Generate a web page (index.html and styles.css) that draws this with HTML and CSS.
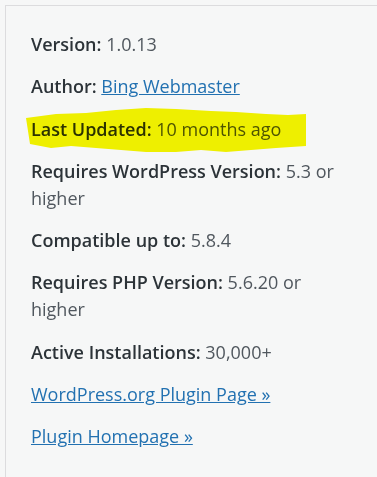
FILE: index.html
```html
<!DOCTYPE html>
<html>
<head>
  <title>Plugin details</title>
  <meta http-equiv="Content-Type" content="text/html; charset=utf-8">
  <link rel="stylesheet" href="styles.css">
</head>
<body>
<div class="fyi">
  <ul>
    <li><strong>Version:</strong> 1.0.13</li>
    <li><strong>Author:</strong> <a href="#">Bing Webmaster</a></li>
    <li class="marked">
      <svg class="marker" width="282" height="50" viewBox="0 0 282 50">
        <path d="M0 12 L30 8 L60 7 L90 4 L120 2 L150 3 L185 5 L210 6 L240 8 L262 9 L280 8 L280 40 L250 42 L225 44 L200 46 L175 44 L150 46 L120 46 L95 44 L70 42 L45 40 L25 42 L4 38 Z" fill="#f7f700"/>
      </svg>
      <strong>Last Updated:</strong> 10 months ago
    </li>
    <li><strong>Requires WordPress Version:</strong> 5.3 or higher</li>
    <li><strong>Compatible up to:</strong> 5.8.4</li>
    <li><strong>Requires PHP Version:</strong> 5.6.20 or higher</li>
    <li><strong>Active Installations:</strong> 30,000+</li>
    <li><a href="#">WordPress.org Plugin Page &raquo;</a></li>
    <li><a href="#">Plugin Homepage &raquo;</a></li>
  </ul>
</div>
</body>
</html>
```

FILE: styles.css
```css
body {
  margin: 0;
  background: #f6f7f7;
  font-family: "Open Sans", "Noto Sans", sans-serif;
  font-size: 18px;
  color: #50575e;
}

div.fyi {
  box-sizing: border-box;
  height: calc(100vh - 5px);
  margin: 5px 0 0 5px;
  border-top: 1px solid #dcdcde;
  border-left: 1px solid #dcdcde;
  padding: 25px 30px 0 25px;
  overflow: hidden;
}

div.fyi ul {
  list-style: none;
  margin: 0;
  padding: 0;
}

div.fyi li {
  line-height: 27px;
  margin: 0 0 15.25px 0;
  position: relative;
}

div.fyi strong {
  color: #2c3338;
  font-weight: 600;
}

div.fyi a {
  color: #2271b1;
  text-decoration: underline;
}

li.marked .marker {
  position: absolute;
  left: -5px;
  top: -10px;
  mix-blend-mode: multiply;
}
```
